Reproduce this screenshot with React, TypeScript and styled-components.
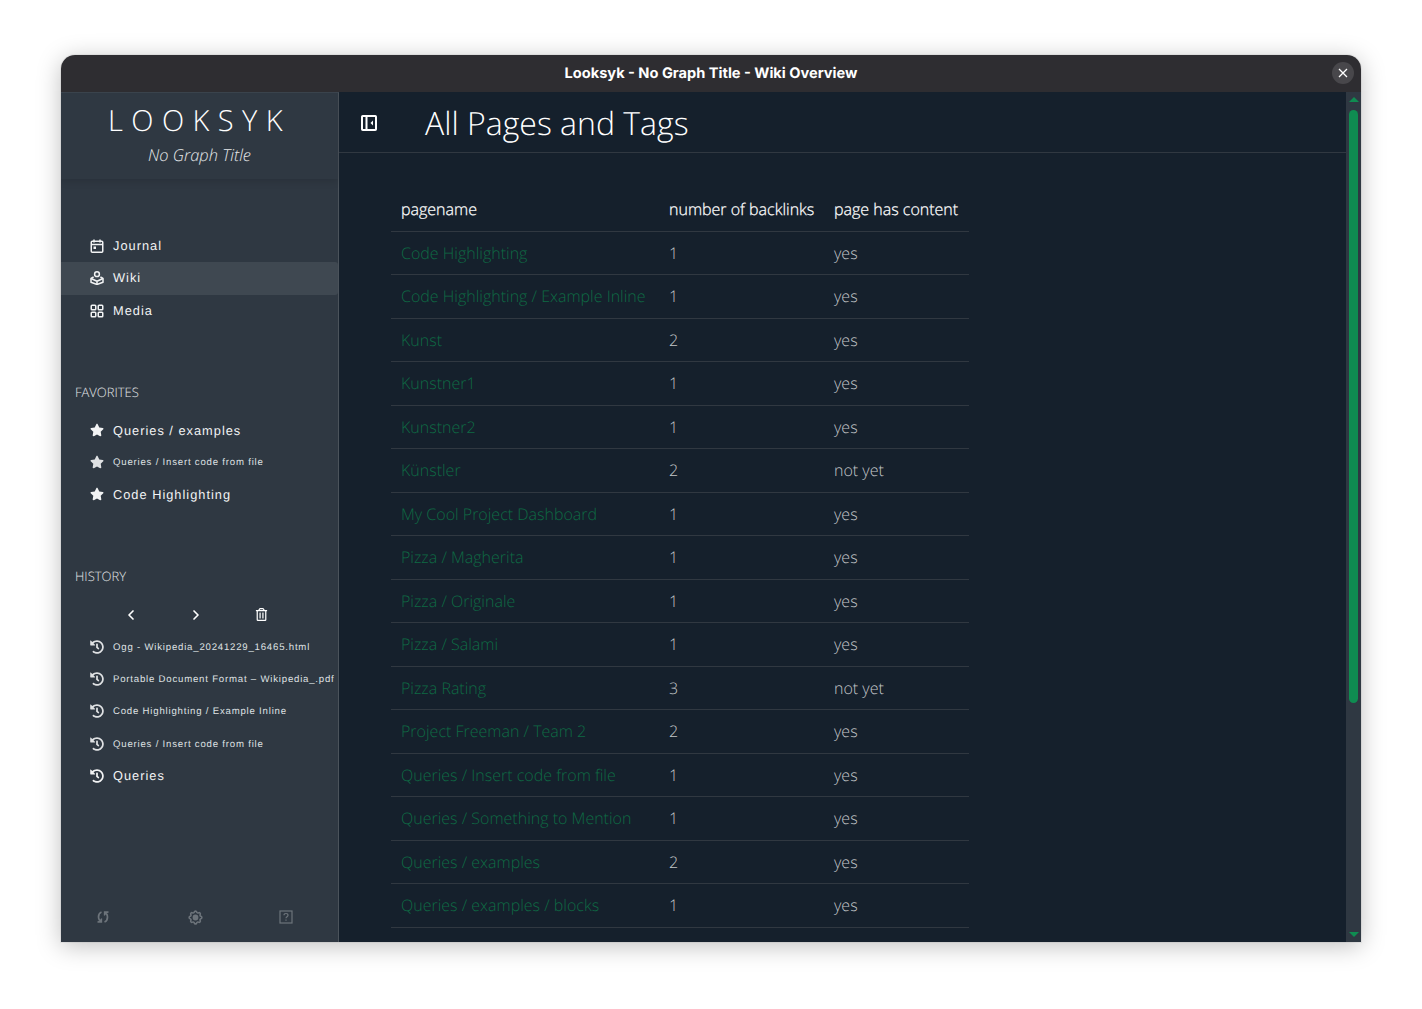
import { ReactNode } from "react";
import styled, { createGlobalStyle } from "styled-components";
import { FaHistory, FaRegTrashAlt, FaStar } from "react-icons/fa";
import { LuChevronLeft, LuChevronRight } from "react-icons/lu";
import { TbSettings } from "react-icons/tb";

const GlobalStyle = createGlobalStyle`
	html, body {
		margin: 0;
		padding: 0;
		background: #fff;
		text-rendering: geometricPrecision;
	}
`;

const Page = styled.div`
	height: 1009px;
	box-sizing: border-box;
	padding: 55px 61px 67px;
	overflow: hidden;
`;

const Window = styled.div`
	width: 1300px;
	height: 887px;
	display: flex;
	flex-direction: column;
	border-radius: 14px 14px 0 0;
	overflow: hidden;
	box-shadow: 0 4px 24px rgba(0, 0, 0, 0.25), 0 0 0 1px rgba(0, 0, 0, 0.05);
`;

const TitleBar = styled.header`
	height: 37px;
	flex: none;
	position: relative;
	display: flex;
	align-items: center;
	justify-content: center;
	padding-bottom: 1px;
	box-sizing: border-box;
	background: #2e2d31;
	color: #fff;
	font: 700 14.6px "Inter", "Liberation Sans", sans-serif;
`;

const CloseButton = styled.div`
	position: absolute;
	right: 7px;
	top: 7px;
	width: 22px;
	height: 22px;
	border-radius: 50%;
	background: #48474b;
	display: flex;
	align-items: center;
	justify-content: center;
`;

const Body = styled.div`
	flex: 1;
	min-height: 0;
	display: flex;
`;

const Sidebar = styled.aside`
	width: 278px;
	flex: none;
	box-sizing: border-box;
	background: #2f3842;
	border-right: 1px solid #4b535b;
	border-top: 1px solid #3d4650;
	display: flex;
	flex-direction: column;
	color: #fff;
	font-family: "Liberation Sans", Arial, sans-serif;
`;

const Brand = styled.div`
	height: 86px;
	flex: none;
	box-shadow: 0 2px 8px rgba(0, 0, 0, 0.14);
	display: flex;
	flex-direction: column;
	align-items: center;
	font-family: "Open Sans", sans-serif;
	font-weight: 300;
`;

const BrandName = styled.div`
	margin-top: 9px;
	font-size: 29px;
	line-height: 38px;
	letter-spacing: 8.4px;
`;

const BrandTitle = styled.div`
	margin-top: 4px;
	font-size: 16.4px;
	line-height: 22px;
	font-style: italic;
	color: #e6e8ea;
`;

const Group = styled.nav<{ $top: number }>`
	margin-top: ${(p) => p.$top}px;
	display: flex;
	flex-direction: column;
`;

const Item = styled.div<{ $active?: boolean; $small?: boolean; $tall?: boolean; $lift?: number }>`
	height: ${(p) => (p.$tall ? "33px" : "32.2px")};
	flex: none;
	box-sizing: border-box;
	display: flex;
	align-items: center;
	gap: 8px;
	padding-left: 28px;
	padding-bottom: ${(p) => p.$lift ?? 0}px;
	white-space: nowrap;
	border-radius: 0 3px 3px 0;
	background: ${(p) => (p.$active ? "#3f4851" : "transparent")};
	font-size: ${(p) => (p.$small ? 9.6 : 12.8)}px;
	letter-spacing: ${(p) => (p.$small ? 0.8 : 1)}px;
	color: ${(p) => (p.$small ? "#dfe1e3" : "#f2f3f4")};
`;

const ItemLabel = styled.span<{ $small?: boolean }>`
	margin-top: ${(p) => (p.$small ? 1 : 0)}px;
`;

const IconSlot = styled.span`
	width: 16px;
	flex: none;
	display: flex;
	align-items: center;
	justify-content: center;
`;

const SectionLabel = styled.div<{ $top: number }>`
	margin-top: ${(p) => p.$top}px;
	padding-left: 14px;
	font: 300 13px/18px "Open Sans", sans-serif;
	color: #e4e6e8;
`;

const HistoryTools = styled.div`
	margin-top: 14px;
	height: 32px;
	display: flex;
	align-items: center;
	padding-left: 62px;
	gap: 49px;
`;

const SidebarFooter = styled.div`
	margin-top: auto;
	height: 50px;
	flex: none;
	box-sizing: border-box;
	padding: 0 45px 0 34px;
	display: flex;
	align-items: center;
	justify-content: space-between;
	color: #6d747b;

	svg path:last-child {
		fill: currentColor;
	}
`;

const Main = styled.main`
	flex: 1;
	min-width: 0;
	background: #15202c;
	color: #fff;
	font-family: "Open Sans", sans-serif;
	font-weight: 300;
	overflow: hidden;
`;

const MainHeader = styled.div`
	height: 61px;
	box-sizing: border-box;
	display: flex;
	align-items: center;
	padding: 2px 0 0 21px;
	border-bottom: 1px solid #303841;
	color: #fff;
`;

const Heading = styled.h1`
	margin: 0 0 0 47px;
	font-size: 32px;
	line-height: 45px;
	font-weight: 300;
`;

const Table = styled.table`
	margin: 35px 0 0 52px;
	width: 578px;
	border-collapse: collapse;
	table-layout: fixed;
	font-size: 16px;
`;

const HeadCell = styled.th<{ $width: number }>`
	width: ${(p) => p.$width}px;
	height: 43px;
	box-sizing: border-box;
	padding: 0 10px;
	text-align: left;
	font-weight: 300;
	color: #fff;
	-webkit-text-stroke: 0.25px #fff;
	white-space: nowrap;
	border-bottom: 1px solid #303841;
`;

const Cell = styled.td`
	height: 43.5px;
	box-sizing: border-box;
	padding: 0 10px;
	white-space: nowrap;
	color: #c3c6c9;
	border-bottom: 1px solid #303841;
`;

const PageLink = styled.a`
	color: #0e6b44;
`;

const Scrollbar = styled.div`
	width: 15px;
	flex: none;
	background: #2f3842;
	display: flex;
	flex-direction: column;
	align-items: center;
	padding-top: 5px;
	box-sizing: border-box;
`;

const ArrowUp = styled.div`
	width: 0;
	height: 0;
	border-left: 5px solid transparent;
	border-right: 5px solid transparent;
	border-bottom: 5px solid #0f8c51;
`;

const ScrollThumb = styled.div`
	margin-top: 8px;
	width: 9px;
	height: 593px;
	background: #0f8c51;
	border-radius: 5px;
`;

const ArrowDown = styled.div`
	margin-top: auto;
	margin-bottom: 5px;
	width: 0;
	height: 0;
	border-left: 5px solid transparent;
	border-right: 5px solid transparent;
	border-top: 5px solid #0f8c51;
`;

const CalendarIcon = () => (
	<svg viewBox="0 0 14 14" width="14" height="14" fill="none" stroke="currentColor" strokeWidth="1.5">
		<rect x="1.25" y="2.25" width="11.5" height="11" rx="1" />
		<path d="M1 5.5h12M4 0.5v3M10 0.5v3" />
		<rect x="3.5" y="7.5" width="2.5" height="2.5" fill="currentColor" stroke="none" />
	</svg>
);

const WikiIcon = () => (
	<svg viewBox="0 0 14 14" width="14" height="14" fill="none" stroke="currentColor" strokeWidth="1.5" strokeLinejoin="round">
		<circle cx="7" cy="3.2" r="2.4" />
		<path d="M3.6 6 1 7.5v3.7l6 2.3 6-2.3V7.5L10.4 6" />
		<path d="M1 7.5l6 2.8 6-2.8M7 10.3v3.2" />
	</svg>
);

const GridIcon = () => (
	<svg viewBox="0 0 14 14" width="14" height="14" fill="none" stroke="currentColor" strokeWidth="1.5">
		<rect x="1.25" y="1.25" width="4.5" height="4.5" rx="0.8" />
		<rect x="8.25" y="1.25" width="4.5" height="4.5" rx="0.8" />
		<rect x="1.25" y="8.25" width="4.5" height="4.5" rx="0.8" />
		<rect x="8.25" y="8.25" width="4.5" height="4.5" rx="0.8" />
	</svg>
);

const SyncIcon = () => (
	<svg viewBox="0 0 16 16" width="16" height="16" fill="none" stroke="currentColor" strokeWidth="1.7">
		<path d="M6.5 3C4.5 3.8 3.5 6 3.5 8c0 1.4.4 2.5 1.2 3.5" />
		<path d="M9.5 13c2-.8 3-3 3-5 0-1.4-.4-2.5-1.2-3.5" />
		<path d="M2.5 13h4V9.5M13.5 3h-4v3.5" strokeWidth="1.3" />
	</svg>
);

const HelpIcon = () => (
	<svg viewBox="0 0 14 14" width="14" height="14" fill="none" stroke="currentColor" strokeWidth="1.2">
		<rect x="1" y="1" width="12" height="12" />
		<path d="M5 5.3C5 4 6 3.5 7 3.5s2 .6 2 1.7c0 1.5-2 1.5-2 3" />
		<path d="M6.4 9.5h1.2v1.2H6.4z" fill="currentColor" stroke="none" />
	</svg>
);

const SidebarToggleIcon = () => (
	<svg viewBox="0 0 18 18" width="18" height="18" fill="none" stroke="currentColor" strokeWidth="2">
		<rect x="2" y="2" width="14" height="14" rx="0.8" />
		<path d="M6.5 2v14" />
		<path d="M13 6.5v5L10.5 9z" fill="currentColor" stroke="none" />
	</svg>
);

const CloseIcon = () => (
	<svg viewBox="0 0 10 10" width="10" height="10" stroke="#fff" strokeWidth="1.3">
		<path d="M1 1l8 8M9 1L1 9" />
	</svg>
);

type Row = [string, number, string];

const rows: Row[] = [
	["Code Highlighting", 1, "yes"],
	["Code Highlighting / Example Inline", 1, "yes"],
	["Kunst", 2, "yes"],
	["Kunstner1", 1, "yes"],
	["Kunstner2", 1, "yes"],
	["Künstler", 2, "not yet"],
	["My Cool Project Dashboard", 1, "yes"],
	["Pizza / Magherita", 1, "yes"],
	["Pizza / Originale", 1, "yes"],
	["Pizza / Salami", 1, "yes"],
	["Pizza Rating", 3, "not yet"],
	["Project Freeman / Team 2", 2, "yes"],
	["Queries / Insert code from file", 1, "yes"],
	["Queries / Something to Mention", 1, "yes"],
	["Queries / examples", 2, "yes"],
	["Queries / examples / blocks", 1, "yes"],
];

const nav: [string, ReactNode, number][] = [
	["Journal", <CalendarIcon />, 0],
	["Wiki", <WikiIcon />, 2],
	["Media", <GridIcon />, 1],
];

const favorites: [string, boolean][] = [
	["Queries / examples", false],
	["Queries / Insert code from file", true],
	["Code Highlighting", false],
];

const history: [string, boolean][] = [
	["Ogg - Wikipedia_20241229_16465.html", true],
	["Portable Document Format – Wikipedia_.pdf", true],
	["Code Highlighting / Example Inline", true],
	["Queries / Insert code from file", true],
	["Queries", false],
];

const App = () => {
	return (
		<Page>
			<GlobalStyle />
			<Window>
				<TitleBar>
					Looksyk - No Graph Title - Wiki Overview
					<CloseButton>
						<CloseIcon />
					</CloseButton>
				</TitleBar>
				<Body>
					<Sidebar>
						<Brand>
							<BrandName>LOOKSYK</BrandName>
							<BrandTitle>No Graph Title</BrandTitle>
						</Brand>
						<Group $top={50}>
							{nav.map(([label, icon, lift]) => (
								<Item key={label} $tall={label !== "Media"} $active={label === "Wiki"} $lift={lift}>
									<IconSlot>{icon}</IconSlot>
									{label}
								</Item>
							))}
						</Group>
						<SectionLabel $top={55.8}>FAVORITES</SectionLabel>
						<Group $top={13}>
							{favorites.map(([label, small]) => (
								<Item key={label} $small={small}>
									<IconSlot>
										<FaStar size={14} />
									</IconSlot>
									<ItemLabel $small={small}>{label}</ItemLabel>
								</Item>
							))}
						</Group>
						<SectionLabel $top={56.4}>HISTORY</SectionLabel>
						<HistoryTools>
							<IconSlot>
								<LuChevronLeft size={16} strokeWidth={2.5} />
							</IconSlot>
							<IconSlot>
								<LuChevronRight size={16} strokeWidth={2.5} />
							</IconSlot>
							<IconSlot>
								<FaRegTrashAlt size={13} />
							</IconSlot>
						</HistoryTools>
						<Group $top={0}>
							{history.map(([label, small]) => (
								<Item key={label} $small={small}>
									<IconSlot>
										<FaHistory size={14} />
									</IconSlot>
									<ItemLabel $small={small}>{label}</ItemLabel>
								</Item>
							))}
						</Group>
						<SidebarFooter>
							<SyncIcon />
							<TbSettings size={17} strokeWidth={2.2} />
							<HelpIcon />
						</SidebarFooter>
					</Sidebar>
					<Main>
						<MainHeader>
							<SidebarToggleIcon />
							<Heading>All Pages and Tags</Heading>
						</MainHeader>
						<Table>
							<thead>
								<tr>
									<HeadCell $width={268}>pagename</HeadCell>
									<HeadCell $width={165}>number of backlinks</HeadCell>
									<HeadCell $width={145}>page has content</HeadCell>
								</tr>
							</thead>
							<tbody>
								{rows.map(([name, links, content]) => (
									<tr key={name}>
										<Cell>
											<PageLink>{name}</PageLink>
										</Cell>
										<Cell>{links}</Cell>
										<Cell>{content}</Cell>
									</tr>
								))}
							</tbody>
						</Table>
					</Main>
					<Scrollbar>
						<ArrowUp />
						<ScrollThumb />
						<ArrowDown />
					</Scrollbar>
				</Body>
			</Window>
		</Page>
	);
};

export default App;
